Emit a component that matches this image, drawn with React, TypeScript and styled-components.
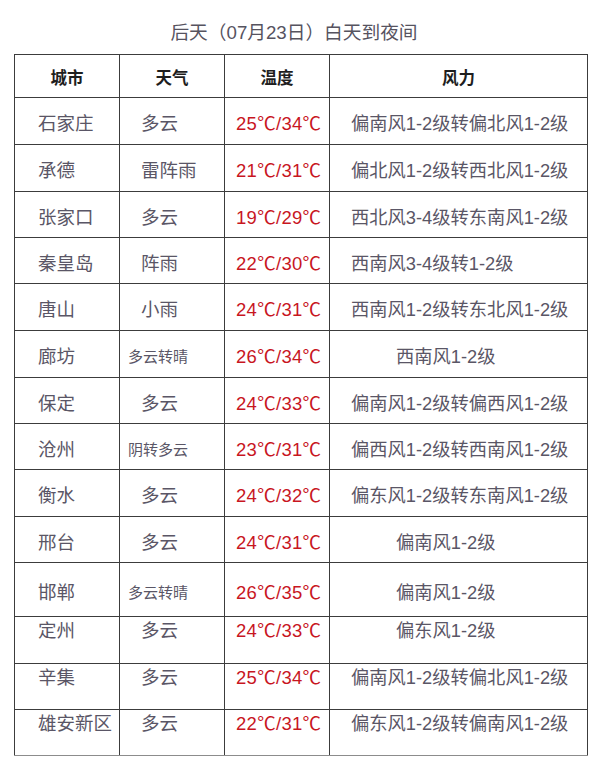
import React from "react";
import styled, { createGlobalStyle } from "styled-components";

type Row = {
  city: string;
  weather: string;
  small?: boolean;
  temp: string;
  wind: string;
  short?: boolean;
  h: number;
  top?: boolean;
};

const rows: Row[] = [
  { city: "石家庄", weather: "多云", temp: "25℃/34℃", wind: "偏南风1-2级转偏北风1-2级", h: 47 },
  { city: "承德", weather: "雷阵雨", temp: "21℃/31℃", wind: "偏北风1-2级转西北风1-2级", h: 47 },
  { city: "张家口", weather: "多云", temp: "19℃/29℃", wind: "西北风3-4级转东南风1-2级", h: 46 },
  { city: "秦皇岛", weather: "阵雨", temp: "22℃/30℃", wind: "西南风3-4级转1-2级", h: 46 },
  { city: "唐山", weather: "小雨", temp: "24℃/31℃", wind: "西南风1-2级转东北风1-2级", h: 47 },
  { city: "廊坊", weather: "多云转晴", small: true, temp: "26℃/34℃", wind: "西南风1-2级", short: true, h: 47 },
  { city: "保定", weather: "多云", temp: "24℃/33℃", wind: "偏南风1-2级转偏西风1-2级", h: 46 },
  { city: "沧州", weather: "阴转多云", small: true, temp: "23℃/31℃", wind: "偏西风1-2级转西南风1-2级", h: 46 },
  { city: "衡水", weather: "多云", temp: "24℃/32℃", wind: "偏东风1-2级转东南风1-2级", h: 47 },
  { city: "邢台", weather: "多云", temp: "24℃/31℃", wind: "偏南风1-2级", short: true, h: 46 },
  { city: "邯郸", weather: "多云转晴", small: true, temp: "26℃/35℃", wind: "偏南风1-2级", short: true, h: 54 },
  { city: "定州", weather: "多云", temp: "24℃/33℃", wind: "偏东风1-2级", short: true, h: 47, top: true },
  { city: "辛集", weather: "多云", temp: "25℃/34℃", wind: "偏南风1-2级转偏北风1-2级", h: 46, top: true },
  { city: "雄安新区", weather: "多云", temp: "22℃/31℃", wind: "偏东风1-2级转偏南风1-2级", h: 46, top: true },
];

const App: React.FC = () => {
  return (
    <Page>
      <GlobalStyle />
      <Title>后天（07月23日）白天到夜间</Title>
      <Table>
        <colgroup>
          <col style={{ width: 105 }} />
          <col style={{ width: 105 }} />
          <col style={{ width: 105 }} />
          <col style={{ width: 258 }} />
        </colgroup>
        <thead>
          <tr>
            <Head>城市</Head>
            <Head>天气</Head>
            <Head>温度</Head>
            <Head>风力</Head>
          </tr>
        </thead>
        <tbody>
          {rows.map((r) => (
            <BodyRow key={r.city} $h={r.h} $top={r.top}>
              <City>{r.city}</City>
              <Weather $small={r.small}>{r.weather}</Weather>
              <Temp>{r.temp}</Temp>
              <Wind $short={r.short}>{r.wind}</Wind>
            </BodyRow>
          ))}
        </tbody>
      </Table>
    </Page>
  );
};

export default App;

const GlobalStyle = createGlobalStyle`
  html, body {
    margin: 0;
    padding: 0;
    background: #ffffff;
  }
  body {
    font-family: "Liberation Sans", "Noto Sans CJK SC", sans-serif;
  }
`;

const Page = styled.div`
  width: 600px;
  height: 775px;
  padding-top: 20px;
  box-sizing: border-box;
  background: #fff;
`;

const Title = styled.div`
  text-align: center;
  font-size: 18.7px;
  line-height: 26px;
  color: #56535f;
  padding-right: 12px;
  margin-bottom: 8px;
`;

const Table = styled.table`
  margin-left: 14px;
  width: 574px;
  border-collapse: collapse;
  table-layout: fixed;

  td,
  th {
    border: 1px solid #3c3c3c;
    padding: 0;
  }
  tbody tr:last-child td {
    border-bottom-color: #8c8c8c;
  }
`;

const Head = styled.th`
  height: 40px;
  font-family: "Noto Sans CJK SC", sans-serif;
  font-weight: 700;
  font-size: 16.5px;
  color: #1e1e1e;
  text-align: center;
  vertical-align: middle;
  padding-top: 2px !important;
`;

const BodyRow = styled.tr<{ $h: number; $top?: boolean }>`
  td {
    height: ${(p) => p.$h}px;
    box-sizing: border-box;
    vertical-align: ${(p) => (p.$top ? "top" : "middle")};
    padding-top: ${(p) => (p.$top ? "2px" : "6px")};
    font-size: 18.5px;
    line-height: 24px;
    color: #5a5666;
    white-space: nowrap;
  }
`;

const City = styled.td`
  padding-left: 23px !important;
`;

const Weather = styled.td<{ $small?: boolean }>`
  padding-left: ${(p) => (p.$small ? "8px" : "21px")} !important;
  && {
    font-size: ${(p) => (p.$small ? "15px" : "18.5px")};
  }
`;

const Temp = styled.td`
  padding-left: 11px !important;
  && {
    color: #c8161f;
    letter-spacing: 0.3px;
  }
`;

const Wind = styled.td<{ $short?: boolean }>`
  padding-left: ${(p) => (p.$short ? "66px" : "21px")} !important;
  && {
    font-size: 18.3px;
  }
`;
